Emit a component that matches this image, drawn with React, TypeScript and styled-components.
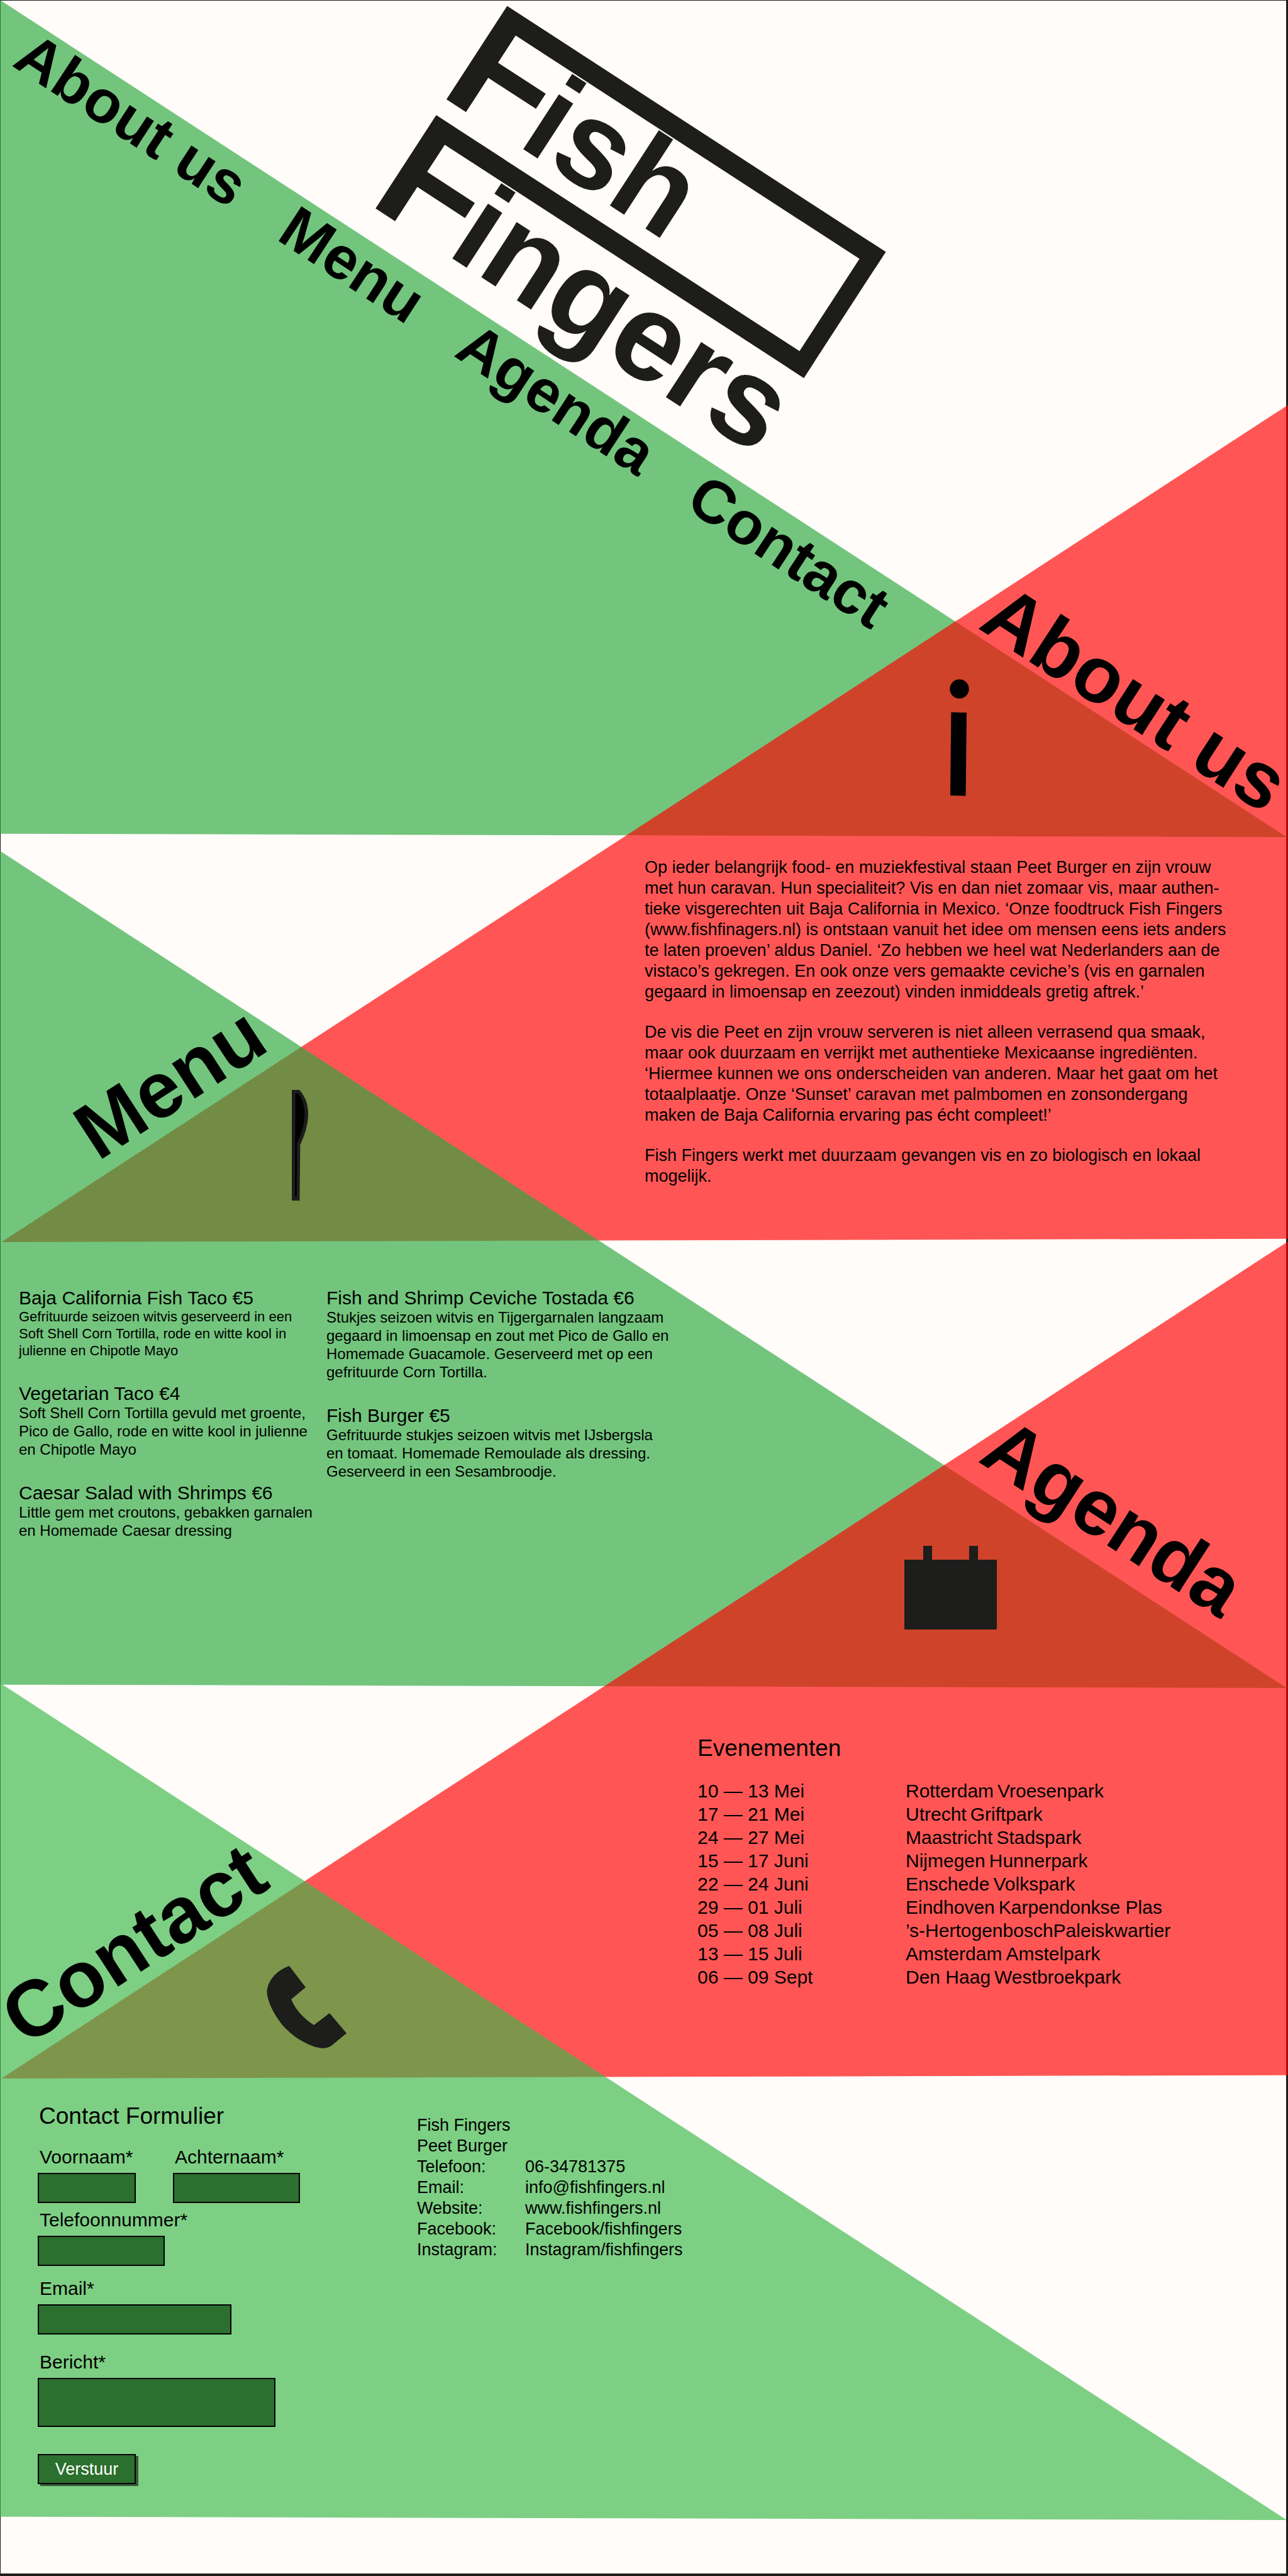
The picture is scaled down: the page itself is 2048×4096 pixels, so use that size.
import React from "react";
import styled, { createGlobalStyle } from "styled-components";

const ink = "#1d1d1b";
const green = "rgba(43, 169, 61, 0.66)";
const lightGreen = "rgba(58, 183, 72, 0.66)";
const red = "rgba(255, 0, 0, 0.66)";

const GlobalStyle = createGlobalStyle`
  *, *::before, *::after { box-sizing: border-box; }
  body { margin: 0; background: #fffcf9; }
`;

const Page = styled.main`
  display: flow-root;
  min-height: 100vh;
  padding-bottom: 89px;
  overflow: hidden;
  background: #fffcf9;
  box-shadow: inset 1px 1px ${ink}, inset -3px -4px ${ink};
  color: #000;
  font-family: "Liberation Sans", Arial, Helvetica, sans-serif;
  font-size: 27px;
  line-height: 33px;
`;

type Side = "left" | "right";

const slope: Record<Side, string> = {
  left: "polygon(0 0, 99.9% 100%, 0 99.6%)",
  right: "polygon(100% 0, 100% 99.6%, 0.1% 100%)",
};

/* A section sits on a triangle that overlaps the one above it. */
const Section = styled.section<{ $side: Side; $tint: string; $overlap?: number }>`
  position: relative;
  isolation: isolate;
  min-height: 1331px;
  margin-top: ${(p) => -(p.$overlap ?? 0)}px;

  &::before {
    content: "";
    position: absolute;
    inset: 0;
    z-index: -1;
    background: ${(p) => p.$tint};
    clip-path: ${(p) => slope[p.$side]};
  }
`;

const Header = styled.header`
  display: grid;
  justify-items: start;
  align-items: start;
`;

const Nav = styled.nav`
  grid-area: 1 / 1;
  display: flex;
  gap: 87px;
  margin: 36px 0 0 62px;
  font-size: 96px;
  font-weight: 700;
  line-height: 96px;
  white-space: nowrap;
  transform: rotate(33.3deg);
  transform-origin: 0 0;
`;

const NavLink = styled.a`
  color: inherit;
  text-decoration: none;
`;

const Logo = styled.svg`
  grid-area: 1 / 1;
  width: 820px;
  height: 720px;
  margin-left: 590px;
  overflow: visible;
  fill: ${ink};
  font-weight: 700;
  pointer-events: none;
`;

const Banner = styled.div`
  display: grid;
  justify-items: start;
  align-items: start;
  min-height: 630px;
`;

const Title = styled.h2<{ $side: Side; $top: number; $left: number }>`
  grid-area: 1 / 1;
  margin: ${(p) => p.$top}px 0 0 ${(p) => p.$left}px;
  font-size: 126px;
  font-weight: 700;
  line-height: 126px;
  white-space: nowrap;
  transform: rotate(${(p) => (p.$side === "right" ? 33 : -33)}deg);
  transform-origin: 0 0;
`;

const Icon = styled.svg<{ $top: number; $left: number }>`
  grid-area: 1 / 1;
  margin: ${(p) => p.$top}px 0 0 ${(p) => p.$left}px;
  fill: ${ink};
`;

const Story = styled.div`
  padding: 89px 0 0 1025px;
`;

const Paragraph = styled.p`
  margin: 0 0 31px;
`;

const Dishes = styled.div`
  display: grid;
  grid-template-columns: 489px 1fr;
  padding: 65px 0 0 30px;
`;

const DishColumn = styled.div`
  display: flex;
  flex-direction: column;
  gap: 39px;
`;

const DishName = styled.h3`
  margin: 0;
  font-size: 30px;
  font-weight: 400;
  line-height: 32px;
`;

const DishText = styled.p<{ $small?: boolean }>`
  margin: 0;
  font-size: ${(p) => (p.$small ? 22 : 24)}px;
  line-height: ${(p) => (p.$small ? 27 : 29)}px;
`;

const Subtitle = styled.h3`
  margin: 0;
  font-size: 37px;
  font-weight: 400;
  line-height: 42px;
`;

const Events = styled.div`
  padding: 155px 0 0 1109px;
`;

const EventTable = styled.table`
  margin-top: 28px;
  border-collapse: collapse;
  font-size: 30px;
  line-height: 37px;

  td {
    padding: 0;
    white-space: nowrap;
  }
  td:first-child {
    width: 331px;
  }
`;

const Park = styled.span<{ $tight?: boolean }>`
  margin-left: ${(p) => (p.$tight ? 0 : 6)}px;
`;

const ContactBody = styled.div`
  display: grid;
  grid-template-columns: 603px 1fr;
  padding: 38px 0 0 60px;
`;

const Form = styled.form`
  display: flex;
  flex-direction: column;
  align-items: flex-start;
`;

const FormTitle = styled(Subtitle)`
  padding-left: 2px;
`;

const FieldRow = styled.div<{ $space: number }>`
  display: flex;
  gap: 59px;
  margin-top: ${(p) => p.$space}px;
`;

const Field = styled.div`
  display: flex;
  flex-direction: column;
  gap: 8px;
`;

const Label = styled.label`
  padding-left: 3px;
  font-size: 30px;
  line-height: 34px;
`;

const Input = styled.input<{ $width: number }>`
  width: ${(p) => p.$width}px;
  height: 48px;
  padding: 0 8px;
  border: 2px solid #000;
  border-radius: 0;
  background: #2b702e;
  color: #fff;
  font: inherit;
`;

const TextArea = styled.textarea`
  display: block;
  width: 378px;
  height: 78px;
  padding: 4px 8px;
  border: 2px solid #000;
  border-radius: 0;
  background: #2b702e;
  color: #fff;
  font: inherit;
  resize: none;
`;

const Submit = styled.button`
  width: 156px;
  height: 48px;
  margin-top: 43px;
  padding: 0;
  border: 2px solid #000;
  border-radius: 0;
  background: #2b702e;
  box-shadow: 4px 3px rgba(20, 30, 20, 0.65);
  color: #fff;
  font: inherit;
`;

/* Keeps a field as wide as its own box when the label is longer. */
const NameField = styled(Field)<{ $width: number }>`
  width: ${(p) => p.$width}px;
`;

const Details = styled.table`
  align-self: start;
  justify-self: start;
  margin-top: 19px;
  border-collapse: collapse;

  td,
  th {
    padding: 0;
    font-weight: 400;
    text-align: left;
    white-space: nowrap;
  }
  tr > :first-child {
    width: 172px;
  }
  a {
    color: inherit;
    text-decoration: none;
  }
`;

const navItems = [
  ["About us", "#about"],
  ["Menu", "#menu"],
  ["Agenda", "#agenda"],
  ["Contact", "#contact"],
];

const story = [
  [
    "Op ieder belangrijk food- en muziekfestival staan Peet Burger en zijn vrouw",
    "met hun caravan. Hun specialiteit? Vis en dan niet zomaar vis, maar authen-",
    "tieke visgerechten uit Baja California in Mexico. ‘Onze foodtruck Fish Fingers",
    "(www.fishfinagers.nl) is ontstaan vanuit het idee om mensen eens iets anders",
    "te laten proeven’ aldus Daniel. ‘Zo hebben we heel wat Nederlanders aan de",
    "vistaco’s gekregen. En ook onze vers gemaakte ceviche’s (vis en garnalen",
    "gegaard in limoensap en zeezout) vinden inmiddeals gretig aftrek.’",
  ],
  [
    "De vis die Peet en zijn vrouw serveren is niet alleen verrasend qua smaak,",
    "maar ook duurzaam en verrijkt met authentieke Mexicaanse ingrediënten.",
    "‘Hiermee kunnen we ons onderscheiden van anderen. Maar het gaat om het",
    "totaalplaatje. Onze ‘Sunset’ caravan met palmbomen en zonsondergang",
    "maken de Baja California ervaring pas écht compleet!’",
  ],
  [
    "Fish Fingers werkt met duurzaam gevangen vis en zo biologisch en lokaal",
    "mogelijk.",
  ],
];

type Dish = { name: string; lines: string[]; small?: boolean };

const dishes: Dish[][] = [
  [
    {
      name: "Baja California Fish Taco €5",
      small: true,
      lines: [
        "Gefrituurde seizoen witvis geserveerd in een",
        "Soft Shell Corn Tortilla, rode en witte kool in",
        "julienne en Chipotle Mayo",
      ],
    },
    {
      name: "Vegetarian Taco €4",
      lines: [
        "Soft Shell Corn Tortilla gevuld met groente,",
        "Pico de Gallo, rode en witte kool in julienne",
        "en Chipotle Mayo",
      ],
    },
    {
      name: "Caesar Salad with Shrimps €6",
      lines: [
        "Little gem met croutons, gebakken garnalen",
        "en Homemade Caesar dressing",
      ],
    },
  ],
  [
    {
      name: "Fish and Shrimp Ceviche Tostada €6",
      lines: [
        "Stukjes seizoen witvis en Tijgergarnalen langzaam",
        "gegaard in limoensap en zout met Pico de Gallo en",
        "Homemade Guacamole. Geserveerd met op een",
        "gefrituurde Corn Tortilla.",
      ],
    },
    {
      name: "Fish Burger €5",
      lines: [
        "Gefrituurde stukjes seizoen witvis met IJsbergsla",
        "en tomaat. Homemade Remoulade als dressing.",
        "Geserveerd in een Sesambroodje.",
      ],
    },
  ],
];

const events = [
  ["10 — 13 Mei", "Rotterdam", "Vroesenpark"],
  ["17 — 21 Mei", "Utrecht", "Griftpark"],
  ["24 — 27 Mei", "Maastricht", "Stadspark"],
  ["15 — 17 Juni", "Nijmegen", "Hunnerpark"],
  ["22 — 24 Juni", "Enschede", "Volkspark"],
  ["29 — 01 Juli", "Eindhoven", "Karpendonkse Plas"],
  ["05 — 08 Juli", "’s-Hertogenbosch", "Paleiskwartier"],
  ["13 — 15 Juli", "Amsterdam", "Amstelpark"],
  ["06 — 09 Sept", "Den Haag", "Westbroekpark"],
];

const details = [
  ["Telefoon:", "06-34781375", "tel:0634781375"],
  ["Email:", "info@fishfingers.nl", "mailto:info@fishfingers.nl"],
  ["Website:", "www.fishfingers.nl", "#website"],
  ["Facebook:", "Facebook/fishfingers", "#facebook"],
  ["Instagram:", "Instagram/fishfingers", "#instagram"],
];

const Lines = ({ lines }: { lines: string[] }) => (
  <>
    {lines.map((line, i) => (
      <React.Fragment key={line}>
        {i > 0 && <br />}
        {line}
      </React.Fragment>
    ))}
  </>
);

const FishFingersLogo = () => (
  <Logo viewBox="0 0 820 720" role="img" aria-label="Fish Fingers">
    <g transform="translate(217 10) rotate(33)">
      <rect width="717" height="32" />
      <rect y="207" width="717" height="32" />
      <rect x="688" width="29" height="239" />
      <text x="-18" y="177" fontSize="257">F</text>
      <text x="131" y="177" fontSize="197">ish</text>
      <text x="-18" y="384" fontSize="257">F</text>
      <text x="131" y="384" fontSize="197">ingers</text>
    </g>
  </Logo>
);

export default function App() {
  return (
    <>
      <GlobalStyle />
      <Page>
        <Section $side="left" $tint={green}>
          <Header>
            <Nav>
              {navItems.map(([label, href]) => (
                <NavLink key={href} href={href}>{label}</NavLink>
              ))}
            </Nav>
            <FishFingersLogo />
          </Header>
        </Section>

        <Section id="about" $side="right" $tint={red} $overlap={687}>
          <Banner>
            <Icon $top={436} $left={1510} width="32" height="186" viewBox="0 0 32 186" aria-hidden="true">
              <circle cx="15.5" cy="15.4" r="15.2" fill="#000" />
              <path d="M2.4 52.6 27 52.8 25.6 185.5 1 185Z" fill="#000" />
            </Icon>
            <Title $side="right" $top={265} $left={1611}>About us</Title>
          </Banner>
          <Story>
            {story.map((lines) => (
              <Paragraph key={lines[0]}><Lines lines={lines} /></Paragraph>
            ))}
          </Story>
        </Section>

        <Section id="menu" $side="left" $tint={green} $overlap={622}>
          <Banner>
            <Title $side="left" $top={405} $left={98}>Menu</Title>
            <Icon $top={380} $left={464} width="27" height="176" viewBox="0 0 27 176" aria-hidden="true">
              <path d="M0 0H12C21 10 26 22 26 38C26 56 20 73 13.4 87L12.4 176H0Z" />
              <path d="M5.7 5.4H10C16 13 20.4 25 20.4 38C20.4 54 15 70 8.3 85L7.6 170H5Z" fill="#000" />
            </Icon>
          </Banner>
          <Dishes>
            {dishes.map((column, i) => (
              <DishColumn key={i}>
                {column.map((dish) => (
                  <article key={dish.name}>
                    <DishName>{dish.name}</DishName>
                    <DishText $small={dish.small}><Lines lines={dish.lines} /></DishText>
                  </article>
                ))}
              </DishColumn>
            ))}
          </Dishes>
        </Section>

        <Section id="agenda" $side="right" $tint={red} $overlap={710}>
          <Banner>
            <Icon $top={484} $left={1438} width="147" height="133" viewBox="0 0 147 133" aria-hidden="true">
              <path d="M0 22H30V0H44V22H103V0H117V22H147V133H0Z" />
            </Icon>
            <Title $side="right" $top={260} $left={1611}>Agenda</Title>
          </Banner>
          <Events>
            <Subtitle>Evenementen</Subtitle>
            <EventTable>
              <tbody>
                {events.map(([date, city, park]) => (
                  <tr key={date}>
                    <td>{date}</td>
                    <td>{city}<Park $tight={city.length > 12}>{park}</Park></td>
                  </tr>
                ))}
              </tbody>
            </EventTable>
          </Events>
        </Section>

        <Section id="contact" $side="left" $tint={lightGreen} $overlap={629}>
          <Banner>
            <Title $side="left" $top={490} $left={-18}>Contact</Title>
            <Icon $top={449} $left={424} width="128" height="133" viewBox="0 0 128 133" aria-hidden="true">
              <path d="M36 1 62 35 39 54Q49 78 75 95L100 76 127 108 104 127Q96 133 86 131.5C66 129 38 112 22 91C10 75 2 58 .5 44C.5 27 13 9 36 1Z" />
            </Icon>
          </Banner>
          <ContactBody>
            <Form onSubmit={(e: React.FormEvent) => e.preventDefault()}>
              <FormTitle>Contact Formulier</FormTitle>
              <FieldRow $space={27}>
                <NameField $width={156}>
                  <Label htmlFor="voornaam">Voornaam*</Label>
                  <Input id="voornaam" $width={156} />
                </NameField>
                <NameField $width={202}>
                  <Label htmlFor="achternaam">Achternaam*</Label>
                  <Input id="achternaam" $width={202} />
                </NameField>
              </FieldRow>
              <FieldRow $space={10}>
                <Field>
                  <Label htmlFor="telefoon">Telefoonnummer*</Label>
                  <Input id="telefoon" type="tel" $width={202} />
                </Field>
              </FieldRow>
              <FieldRow $space={19}>
                <Field>
                  <Label htmlFor="email">Email*</Label>
                  <Input id="email" type="email" $width={308} />
                </Field>
              </FieldRow>
              <FieldRow $space={27}>
                <Field>
                  <Label htmlFor="bericht">Bericht*</Label>
                  <TextArea id="bericht" />
                </Field>
              </FieldRow>
              <Submit type="submit">Verstuur</Submit>
            </Form>
            <Details>
              <tbody>
                <tr><td colSpan={2}>Fish Fingers</td></tr>
                <tr><td colSpan={2}>Peet Burger</td></tr>
                {details.map(([label, value, href]) => (
                  <tr key={label}>
                    <th scope="row">{label}</th>
                    <td><a href={href}>{value}</a></td>
                  </tr>
                ))}
              </tbody>
            </Details>
          </ContactBody>
        </Section>
      </Page>
    </>
  );
}
